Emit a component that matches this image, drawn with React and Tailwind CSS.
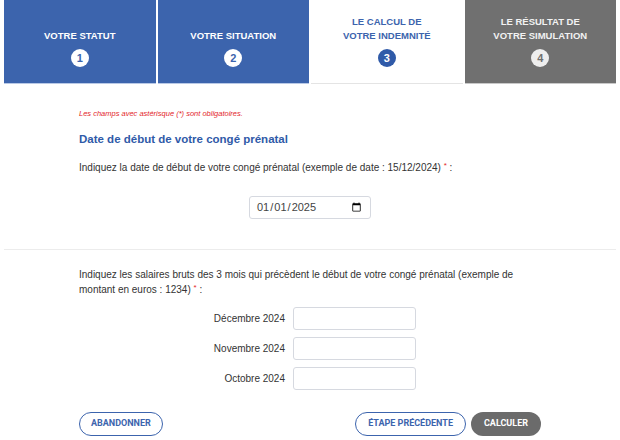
import React from 'react';

const steps = [
  { label: ['VOTRE STATUT'], n: 1, state: 'done' },
  { label: ['VOTRE SITUATION'], n: 2, state: 'done' },
  { label: ['LE CALCUL DE', 'VOTRE INDEMNITÉ'], n: 3, state: 'current' },
  { label: ['LE RÉSULTAT DE', 'VOTRE SIMULATION'], n: 4, state: 'todo' },
];

const months = ['Décembre 2024', 'Novembre 2024', 'Octobre 2024'];

function Step({ step }) {
  const box = {
    done: 'bg-[#3c64ad] text-white border-[#b9c9e6]',
    current: 'bg-white text-[#3c64ad] border-[#e4e4e4]',
    todo: 'bg-[#707070] text-[#f2f2f2] border-[#c8c8c8]',
  }[step.state];
  const dot = {
    done: 'bg-white text-[#3c64ad]',
    current: 'bg-[#2f5aa8] text-white',
    todo: 'bg-[#eeeeee] text-[#707070]',
  }[step.state];

  return (
    <div
      className={`h-[84px] flex flex-col items-center justify-end pb-[16px] border-b ${box}`}>
      <div className="text-[9.5px] font-bold leading-[14px] text-center">
        {step.label.map((l) => (
          <div key={l}>{l}</div>
        ))}
      </div>
      <div
        className={`mt-[6px] w-[18px] h-[18px] rounded-full flex items-center justify-center text-[11px] font-bold ${dot}`}>
        {step.n}
      </div>
    </div>
  );
}

function Required() {
  return (
    <span className="inline-block leading-none relative -top-[3px] text-[#e3262b] text-[8px]">
      *
    </span>
  );
}

export default function App() {
  return (
    <div
      className="w-[620px] h-[440px] bg-white overflow-hidden text-[#333]"
      style={{ fontFamily: '"Liberation Sans", Arial, sans-serif' }}>
      <div className="mx-[4px] grid grid-cols-4 gap-[2px]">
        {steps.map((s) => (
          <Step key={s.n} step={s} />
        ))}
      </div>

      <div className="w-[462px] mx-auto pt-[25px]">
        <p className="text-[7.5px] leading-[10px] italic text-[#e3262b]">
          Les champs avec astérisque (*) sont obligatoires.
        </p>
        <h2 className="mt-[13px] text-[11.5px] leading-[15px] font-bold text-[#2f5aa8]">
          Date de début de votre congé prénatal
        </h2>
        <p className="mt-[14px] text-[10px] leading-[14px]">
          Indiquez la date de début de votre congé prénatal (exemple de date :
          15/12/2024) <Required /> :
        </p>
        <div className="mt-[21px] flex justify-center">
          <input
            type="date"
            defaultValue="2025-01-01"
            className="w-[122px] h-[23px] border border-[#d6d9e0] rounded-[3px] px-[6px] text-[11px] text-[#444]"
          />
        </div>
      </div>

      <div className="mx-[4px] mt-[30px] border-t border-[#ececec]" />

      <div className="w-[462px] mx-auto pt-[17px]">
        <p className="text-[10px] leading-[15px]">
          Indiquez les salaires bruts des 3 mois qui précèdent le début de votre
          congé prénatal (exemple de montant en euros : 1234) <Required /> :
        </p>
        <div className="mt-[10px] flex flex-col gap-[7px]">
          {months.map((m) => (
            <div key={m} className="flex items-center">
              <label className="w-[214px] text-right pr-[8px] text-[10px]">{m}</label>
              <input
                type="text"
                className="w-[123px] h-[23px] border border-[#d6d9e0] rounded-[3px]"
              />
            </div>
          ))}
        </div>
        <div
          className="mt-[22px] flex items-center"
          style={{ fontFamily: 'Roboto, "Liberation Sans", sans-serif' }}>
          <button className="h-[24px] px-[11px] rounded-full border border-[#3c64ad] text-[#3c64ad] text-[9px] font-bold">
            ABANDONNER
          </button>
          <div className="ml-auto flex gap-[5px]">
            <button className="h-[24px] px-[12px] rounded-full border border-[#3c64ad] text-[#3c64ad] text-[9px] font-bold">
              ÉTAPE PRÉCÉDENTE
            </button>
            <button className="h-[24px] px-[13px] rounded-full bg-[#6b6b6b] text-white text-[9px] font-bold">
              CALCULER
            </button>
          </div>
        </div>
      </div>
    </div>
  );
}
